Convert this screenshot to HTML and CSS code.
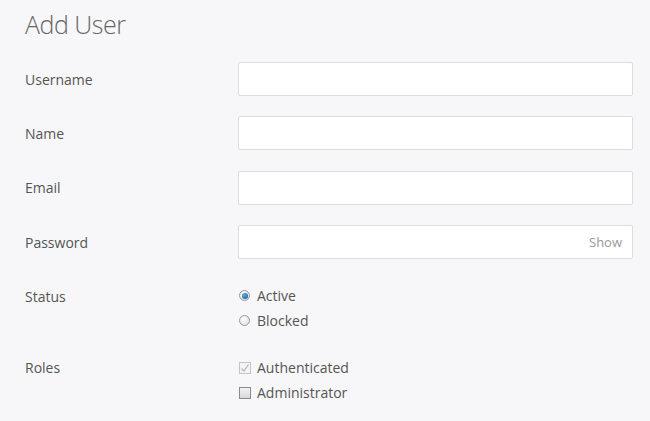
FILE: index.html
```html
<!DOCTYPE html>
<html>
<head>
<meta charset="utf-8">
<link rel="stylesheet" href="styles.css">
</head>
<body>
<div class="page">
  <h1 class="title">Add User</h1>
  <form class="form">
    <div class="row">
      <label class="label">Username</label>
      <div class="field"><div class="input"></div></div>
    </div>
    <div class="row">
      <label class="label">Name</label>
      <div class="field"><div class="input"></div></div>
    </div>
    <div class="row">
      <label class="label">Email</label>
      <div class="field"><div class="input"></div></div>
    </div>
    <div class="row">
      <label class="label">Password</label>
      <div class="field"><div class="input input-pw"><span class="show">Show</span></div></div>
    </div>
    <div class="row row-options">
      <label class="label">Status</label>
      <div class="options">
        <div class="option"><span class="radio radio-on"></span><span>Active</span></div>
        <div class="option"><span class="radio"></span><span>Blocked</span></div>
      </div>
    </div>
    <div class="row row-options row-roles">
      <label class="label">Roles</label>
      <div class="options">
        <div class="option"><span class="check check-disabled"><svg width="10" height="10" viewBox="0 0 10 10"><path d="M1.5 5.5 L4 8 L8.5 1.5" fill="none" stroke="#b8b8b8" stroke-width="1.3"/></svg></span><span>Authenticated</span></div>
        <div class="option"><span class="check"></span><span>Administrator</span></div>
      </div>
    </div>
  </form>
</div>
</body>
</html>
```
FILE: styles.css
```css
html, body {
  margin: 0;
  padding: 0;
  background: #f7f7f9;
}
body {
  font-family: "Open Sans", "Liberation Sans", sans-serif;
  color: #555;
}
.page {
  padding: 6px 17px 0 25px;
}
.title {
  margin: 0 0 20px 0;
  font-size: 25px;
  letter-spacing: -0.5px;
  font-weight: 300;
  color: #666;
  line-height: 36px;
}
.form {
  display: flex;
  flex-direction: column;
  gap: 20.4px;
}
.row {
  display: flex;
  align-items: center;
  height: 34px;
}
.label {
  width: 213px;
  flex: none;
  font-size: 14px;
  color: #555;
}
.field {
  flex: 1;
}
.input {
  height: 32px;
  background: #fff;
  border: 1px solid #dcdcdc;
  border-radius: 2px;
  display: flex;
  align-items: center;
  justify-content: flex-end;
}
.show {
  font-size: 13px;
  color: #999;
  padding-right: 10px;
}
.row-options {
  height: auto;
  align-items: flex-start;
  margin-top: 6px;
}
.row-options .label {
  line-height: 20px;
  margin-top: 1px;
}
.row-roles {
  margin-top: 7px;
}
.row-roles .label {
  margin-top: 0;
}
.options {
  display: flex;
  flex-direction: column;
  gap: 5px;
}
.option {
  display: flex;
  align-items: center;
  font-size: 14px;
  line-height: 20px;
  color: #555;
}
.radio {
  width: 9px;
  height: 9px;
  border-radius: 50%;
  border: 1px solid #9a9a9a;
  background: radial-gradient(circle at 40% 35%, #fff, #d8d8d8);
  margin: 0 7px 0 1px;
  box-sizing: content-box;
  position: relative;
}
.radio-on::after {
  content: "";
  position: absolute;
  left: 1.5px;
  top: 1.5px;
  width: 6px;
  height: 6px;
  border-radius: 50%;
  background: radial-gradient(circle at 40% 35%, #5bb0e8, #0a4f8c);
}
.check {
  width: 10px;
  height: 10px;
  border: 1px solid #8a8a8a;
  background: linear-gradient(#f2f2f2, #d8d8d8);
  margin: 0 6px 0 1px;
  display: flex;
  align-items: center;
  justify-content: center;
}
.check-disabled {
  border-color: #c4c4c4;
  background: #f4f4f4;
}
```
